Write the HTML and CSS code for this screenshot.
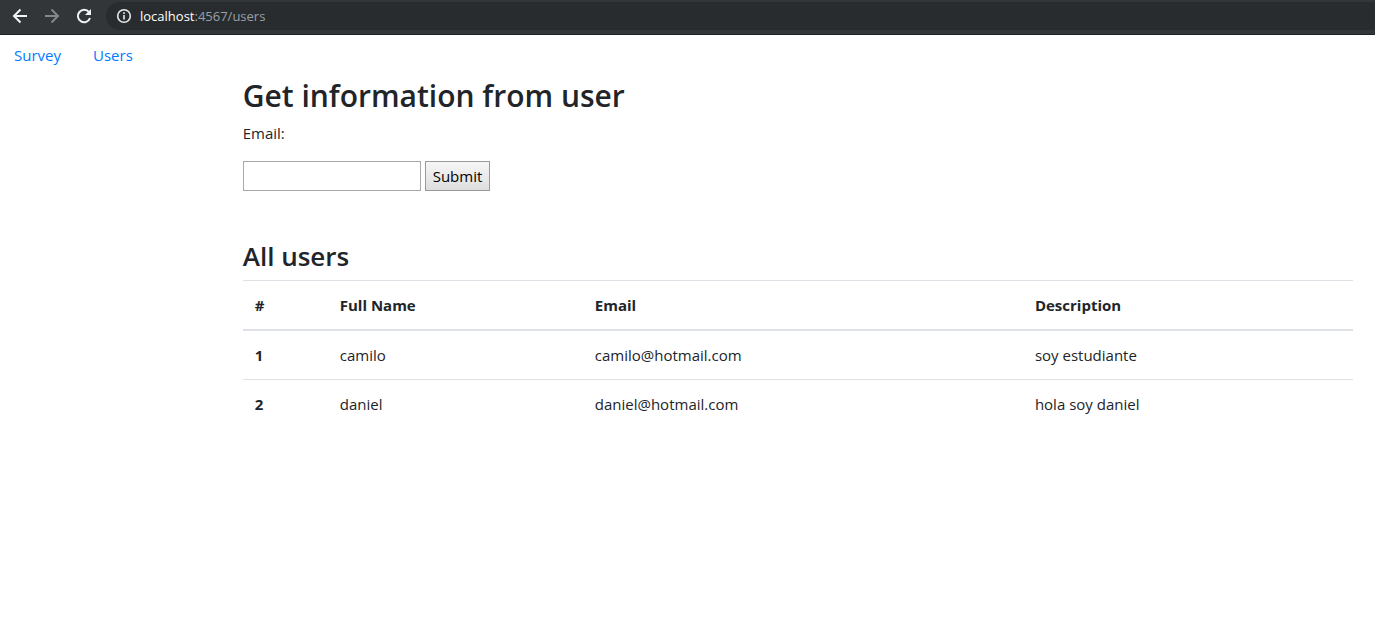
FILE: index.html
```html
<!DOCTYPE html>
<html lang="en">
<head>
<meta charset="utf-8">
<meta name="viewport" content="width=device-width, initial-scale=1">
<title>Users</title>
<link rel="stylesheet" href="styles.css">
</head>
<body>
<header class="browser-bar">
  <div class="browser-actions">
    <button class="icon-button" type="button" aria-label="Back">
      <svg width="16" height="16" viewBox="0 0 16 16" fill="none" stroke="currentColor" stroke-width="2"><path d="M15 8H2.5M8.5 1.5 2 8l6.500 6.500"/></svg>
    </button>
    <button class="icon-button icon-button-muted" type="button" aria-label="Forward">
      <svg width="16" height="16" viewBox="0 0 16 16" fill="none" stroke="currentColor" stroke-width="2"><path d="M1 8h12.500M7.500 1.500 14 8l-6.500 6.500"/></svg>
    </button>
    <button class="icon-button" type="button" aria-label="Reload">
      <svg width="16" height="16" viewBox="0 0 16 16"><path d="M13 4.200A6.200 6.200 0 1 0 14 10" fill="none" stroke="currentColor" stroke-width="2"/><path d="M15 1v6H9z" fill="currentColor"/></svg>
    </button>
  </div>
  <div class="address">
    <svg width="16" height="16" viewBox="0 0 16 16" fill="none" stroke="#e8eaed" stroke-width="1.600" aria-hidden="true"><circle cx="8" cy="8" r="6.300"/><path d="M8 7v4.500M8 4.300v1.700"/></svg>
    <span class="url"><span class="url-host">localhost</span>:4567/users</span>
  </div>
</header>
<nav class="site-nav">
  <a class="nav-link" href="#survey">Survey</a>
  <a class="nav-link" href="#users">Users</a>
</nav>
<main class="content">
  <h1 class="title">Get information from user</h1>
  <form class="lookup">
    <label class="lookup-label" for="email">Email:</label>
    <div class="lookup-row">
      <input class="lookup-input" id="email" name="email" type="text">
      <button class="lookup-submit" type="submit">Submit</button>
    </div>
  </form>
  <h2 class="subtitle">All users</h2>
  <table class="table">
    <colgroup><col class="col-id"><col class="col-name"><col class="col-email"><col></colgroup>
    <thead>
      <tr><th scope="col">#</th><th scope="col">Full Name</th><th scope="col">Email</th><th scope="col">Description</th></tr>
    </thead>
    <tbody>
      <tr><th scope="row">1</th><td>camilo</td><td>camilo@hotmail.com</td><td>soy estudiante</td></tr>
      <tr><th scope="row">2</th><td>daniel</td><td>daniel@hotmail.com</td><td>hola soy daniel</td></tr>
    </tbody>
  </table>
</main>
</body>
</html>
```

FILE: styles.css
```css
* { box-sizing: border-box; }

body {
  margin: 0;
  background: #fff;
  color: #212529;
  font: 15px/24px "Open Sans", "Noto Sans", sans-serif;
}

.browser-bar {
  display: flex;
  align-items: center;
  padding: 2px 0 4px 12px;
  background: #323639;
  border-bottom: 1px solid #202124;
}

.browser-actions {
  display: flex;
  gap: 16px;
  margin-right: 14px;
}

.icon-button {
  display: flex;
  padding: 0;
  border: 0;
  background: none;
  color: #f1f3f4;
}

.icon-button-muted { color: #85888a; }

.address {
  display: flex;
  flex: 1;
  align-items: center;
  gap: 8px;
  height: 28px;
  padding-left: 10px;
  border-radius: 14px 0 0 14px;
  background: #282c2f;
}

.url {
  color: #9aa0a6;
  font-size: 13px;
}

.url-host { color: #fff; }

.site-nav {
  display: flex;
  gap: 32px;
  padding: 8px 14px;
}

.nav-link {
  color: #007bff;
  text-decoration: none;
}

.content {
  margin-left: 17.65%;
  padding: 2px 22px 0 0;
}

.title,
.subtitle {
  margin: 0;
  font-weight: 600;
}

.title {
  margin-bottom: 6px;
  font-size: 30px;
  line-height: 38px;
}

.subtitle {
  margin: 48px 0 7px;
  font-size: 26px;
  line-height: 34px;
}

.lookup-label {
  display: block;
  margin-bottom: 16px;
}

.lookup-row {
  display: flex;
  gap: 4px;
}

.lookup-input {
  width: 178px;
  height: 30px;
  padding: 2px;
  border: 1px solid #a9a9a9;
  background: #fff;
  font: inherit;
}

.lookup-submit {
  height: 30px;
  padding: 0 7px;
  border: 1px solid #999;
  background: linear-gradient(#f6f6f6, #dedede);
  color: #000;
  font: inherit;
}

.table {
  width: 100%;
  border-spacing: 0;
  table-layout: fixed;
}

.col-id { width: 7.66%; }
.col-name { width: 22.97%; }
.col-email { width: 39.64%; }

.table th,
.table td {
  padding: 12px;
  border-top: 1px solid #dee2e6;
  text-align: left;
}

.table th { font-weight: 700; }

.table thead th { border-bottom: 2px solid #dee2e6; }

.table tbody tr:first-child > * { border-top: 0; }
```
